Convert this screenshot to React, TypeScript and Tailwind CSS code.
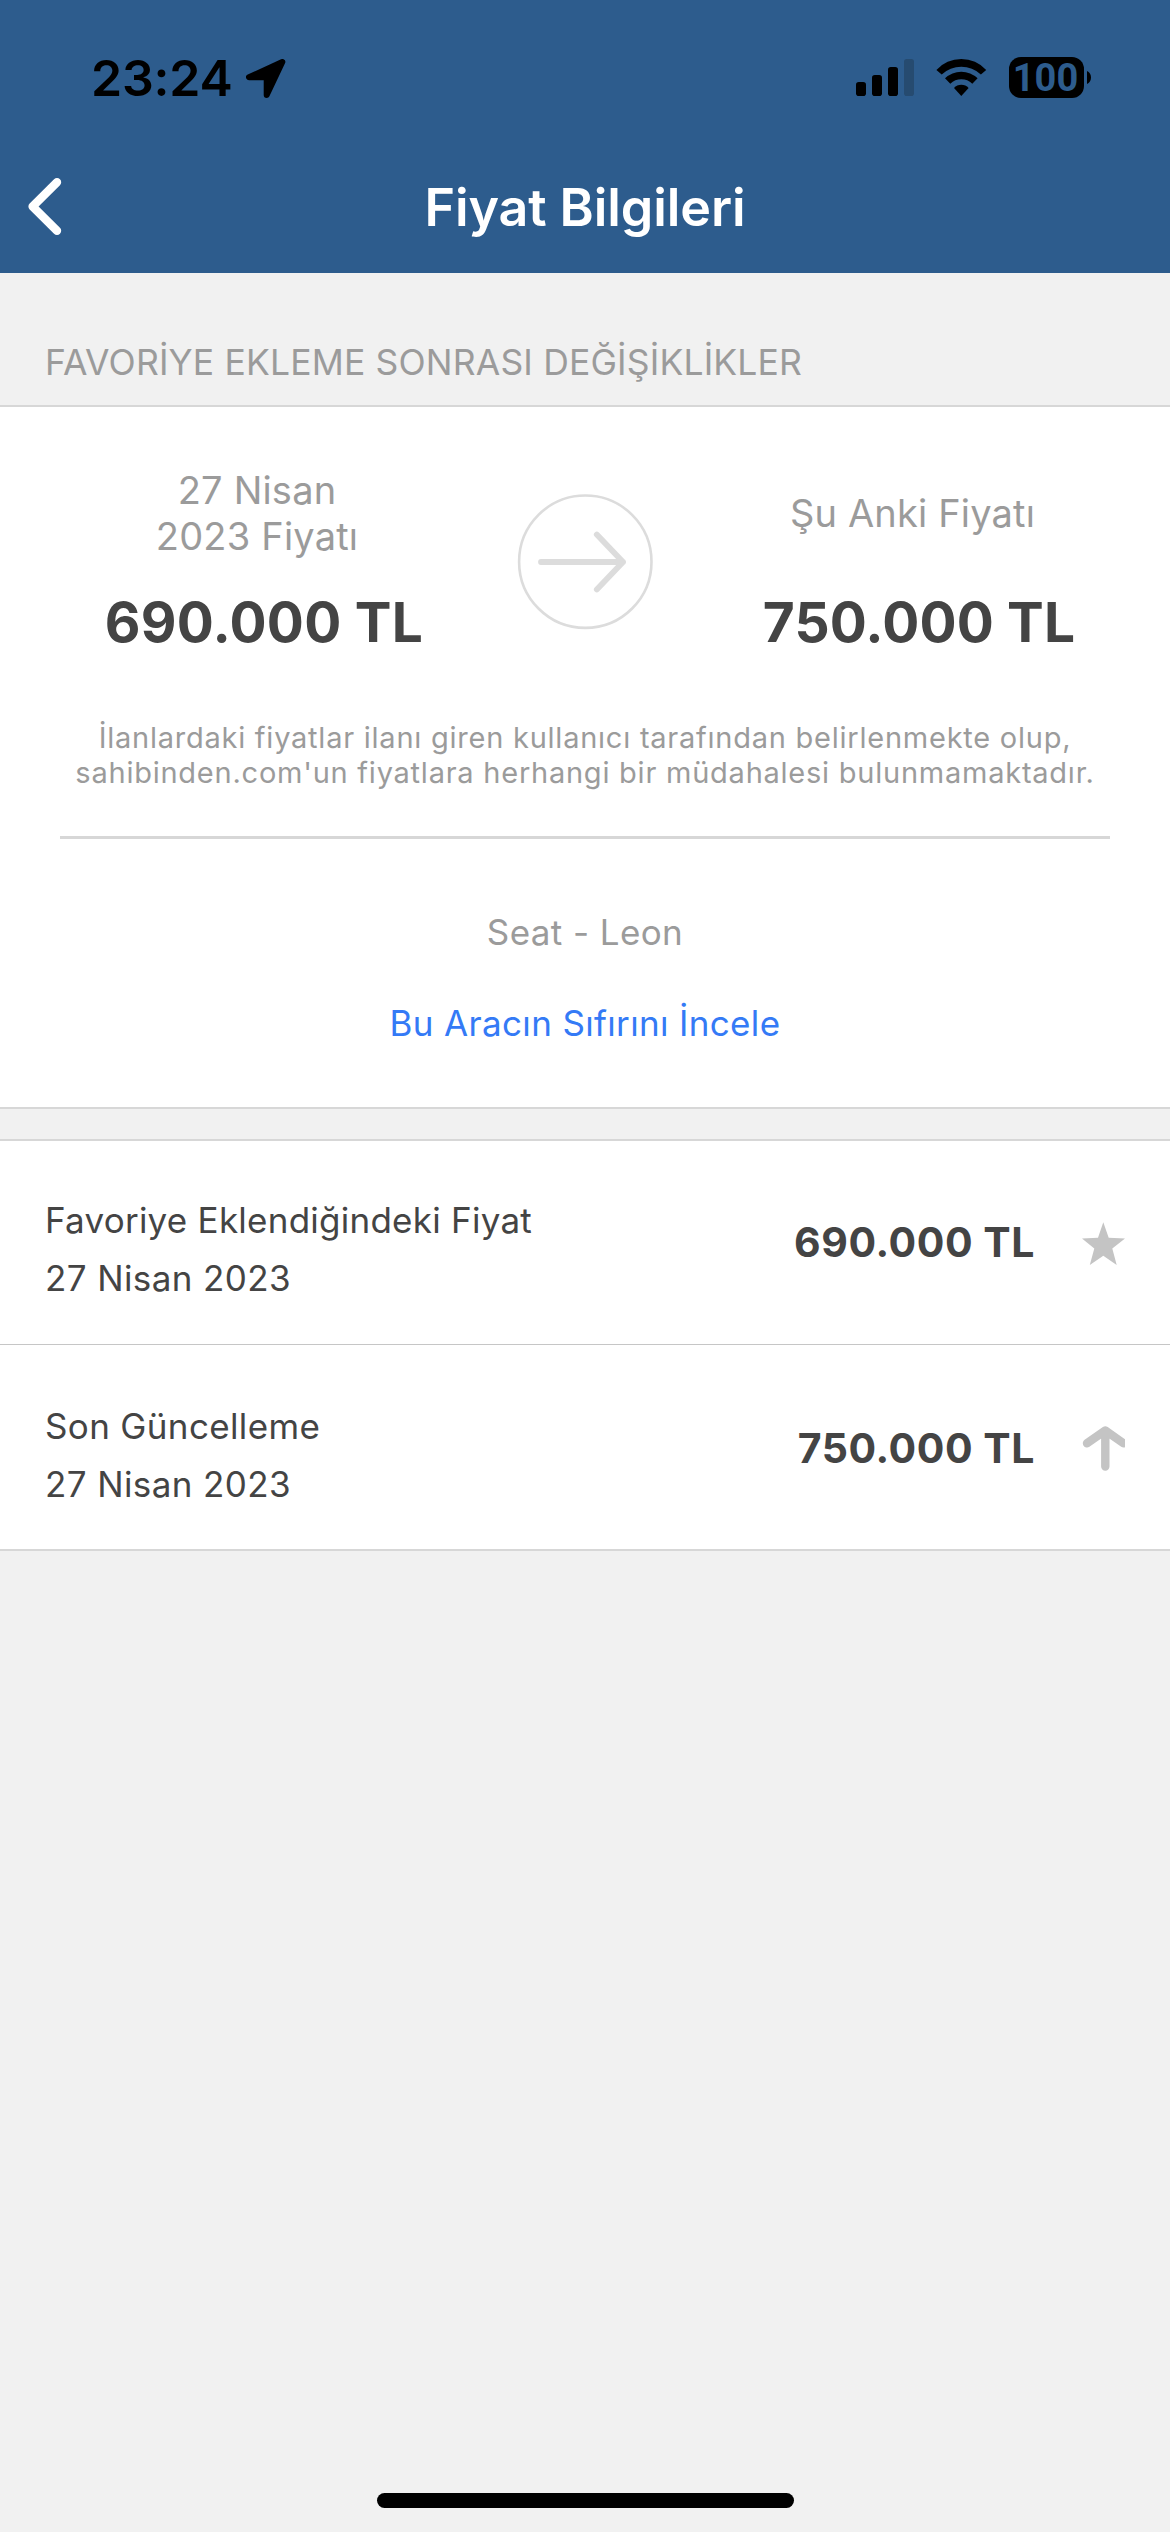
const SignalIcon = () => (
  <svg width="58" height="37" viewBox="0 0 58 37" fill="#000000">
    <rect x="0" y="23" width="10" height="14" rx="2.8" />
    <rect x="16" y="16" width="10" height="21" rx="2.8" />
    <rect x="32" y="8" width="10" height="29" rx="2.8" />
    <rect x="48" y="0" width="10" height="37" rx="2.8" fill="#264b70" />
  </svg>
);

const WifiIcon = () => (
  <svg width="51" height="38" viewBox="0 0 51 38" fill="#000000">
    <path d="M0.4 12A33.5 33.5 0 0 1 50.2 12L44.9 16.4A28.8 28.8 0 0 0 5.7 16.4Z" />
    <path d="M9 20.3A23.5 23.5 0 0 1 41.6 20.3L36.3 25.7A16 16 0 0 0 14.3 25.7Z" />
    <path d="M18 30A9.7 9.7 0 0 1 32.6 30L25.3 38Z" />
  </svg>
);

const StatusBar = () => {
  return (
    <div className="flex h-[142px] items-start justify-between pl-[91px] pr-[79px]">
      <div className="flex items-start pt-12">
        <span className="w-[155px] text-[50px] leading-[60px] font-semibold tracking-[-0.2px] text-black">
          23:24
        </span>
        <svg width="40" height="40" viewBox="0 0 40 40" className="mt-[11px]">
          <path
            d="M36.3 3L3 18.3H20.7V36Z"
            fill="#000000"
            stroke="#000000"
            strokeWidth="6"
            strokeLinejoin="round"
          />
        </svg>
      </div>
      <div className="flex items-start pt-[57px]">
        <div className="mt-[2px] mr-[22px]">
          <SignalIcon />
        </div>
        <div className="mt-px mr-[22px]">
          <WifiIcon />
        </div>
        <div className="flex h-[41px] w-[75px] items-center justify-center rounded-[12px] bg-black pr-[2px]">
          <span className="font-['Roboto',sans-serif] text-[38px] leading-[44px] font-bold text-[#2d5c8d]">
            100
          </span>
        </div>
        <svg width="4" height="13" viewBox="0 0 4 13" className="mt-[14px] ml-[3px]">
          <path d="M0 0C2.4 1 4 3.4 4 6.5S2.4 12 0 13Z" fill="#000000" />
        </svg>
      </div>
    </div>
  );
};

const Header = () => {
  return (
    <header className="h-[273px] bg-[#2d5c8d]">
      <StatusBar />
      <div className="grid h-[131px] grid-cols-[120px_1fr_120px] items-center">
        <svg width="61" height="61" viewBox="0 0 61 61" className="ml-[10px]">
          <path
            d="M47 5.2L22.6 29.5L47 53.8"
            fill="none"
            stroke="#ffffff"
            strokeWidth="8.4"
            strokeLinecap="round"
            strokeLinejoin="round"
          />
        </svg>
        <h1 className="text-center text-[52px] leading-[63px] font-semibold tracking-[-0.1px] text-white">
          Fiyat Bilgileri
        </h1>
      </div>
    </header>
  );
};

const PriceSummary = () => {
  return (
    <section className="h-[704px] border-y-2 border-[#d7d7d7] bg-white pt-[60px] text-center text-[#9b9b9b]">
      <div className="grid grid-cols-[517px_136px_517px]">
        <div>
          <p className="h-[92px] pr-[3px] text-[38px] leading-[46px] tracking-[0.2px]">
            27 Nisan
            <br />
            2023 Fiyatı
          </p>
          <p className="mt-[30px] pl-[11px] text-[55px] leading-[66px] font-bold tracking-[0.25px] text-[#444444]">
            690.000 TL
          </p>
        </div>
        <svg
          width="136"
          height="138"
          viewBox="0 0 136 138"
          fill="none"
          stroke="#dcdcdc"
          className="self-center"
        >
          <circle cx="68.3" cy="69.7" r="66.2" strokeWidth="2.6" />
          <path
            d="M24 70H106M79.8 42.6L106 70L79.8 97.4"
            strokeWidth="5.8"
            strokeLinecap="round"
            strokeLinejoin="round"
          />
        </svg>
        <div>
          <p className="flex h-[92px] items-center justify-center pl-[2px] text-[38px] leading-[46px] tracking-[0.17px]">
            Şu Anki Fiyatı
          </p>
          <p className="mt-[30px] pl-[15px] text-[55px] leading-[66px] font-bold tracking-[0.15px] text-[#444444]">
            750.000 TL
          </p>
        </div>
      </div>
      <p className="mt-[65px] text-[29px] leading-[35px] tracking-[0.76px]">
        İlanlardaki fiyatlar ilanı giren kullanıcı tarafından belirlenmekte olup,
        <br />
        sahibinden.com'un fiyatlara herhangi bir müdahalesi bulunmamaktadır.
      </p>
      <div className="mx-[60px] mt-[46px] h-[3px] bg-[#d7d7d7]"></div>
      <p className="mt-[72px] text-[35px] leading-[42px] tracking-[0.4px]">
        Seat - Leon
      </p>
      <a className="mt-[49px] block text-[35px] leading-[42px] tracking-[0.34px] text-[#347af6]">
        Bu Aracın Sıfırını İncele
      </a>
    </section>
  );
};

const StarIcon = () => (
  <svg width="43" height="50" viewBox="0 0 43 50" fill="#c4c4c4">
    <path d="M21.3 2.3L26.7 17.7L43 18.6L30.3 28.6L34.7 45L21.3 35.8L7.8 45L12.3 28.6L0 18.6L16 17.7Z" />
  </svg>
);

// the right arm runs off the edge of its box
const UpIcon = () => (
  <svg
    width="43"
    height="50"
    viewBox="0 0 43 50"
    fill="none"
    stroke="#c4c4c4"
    strokeWidth="8.4"
    strokeLinecap="round"
    strokeLinejoin="round"
  >
    <path d="M23.3 40.5V5M5 17.3L23.3 4.5L41.6 17.3" />
  </svg>
);

const App = () => {
  return (
    <div className="flex h-[2532px] w-[1170px] flex-col bg-[#f1f1f1] font-['Inter',sans-serif]">
      <Header />
      <h2 className="h-[132px] pt-[68px] pl-[45px] text-[35.5px] leading-[43px] tracking-[0.16px] text-[#9b9b9b]">
        FAVORİYE EKLEME SONRASI DEĞİŞİKLİKLER
      </h2>
      <PriceSummary />

      <section className="mt-[30px] border-y-2 border-[#d7d7d7] bg-white text-[#444444]">
        <div className="flex h-[204px] items-start border-b border-[#c6c6c6] px-[45px] pt-[58px]">
          <div className="flex flex-1 flex-col gap-4 text-[35px] leading-[42px]">
            <p className="tracking-[0.25px]">Favoriye Eklendiğindeki Fiyat</p>
            <p className="tracking-[0.4px]">27 Nisan 2023</p>
          </div>
          <p className="mt-[18px] mr-[47px] text-[41px] leading-[50px] font-bold tracking-[0.55px]">
            690.000 TL
          </p>
          <div className="mt-[21px]">
            <StarIcon />
          </div>
        </div>
        <div className="flex h-[204px] items-start px-[45px] pt-[60px]">
          <div className="flex flex-1 flex-col gap-4 text-[35px] leading-[42px]">
            <p className="tracking-[0.35px]">Son Güncelleme</p>
            <p className="tracking-[0.4px]">27 Nisan 2023</p>
          </div>
          <p className="mt-[18px] mr-[47px] text-[41px] leading-[50px] font-bold tracking-[0.55px]">
            750.000 TL
          </p>
          <div className="mt-[21px]">
            <UpIcon />
          </div>
        </div>
      </section>

      <div className="mx-auto mt-auto mb-[24px] h-[15px] w-[417px] rounded-full bg-black"></div>
    </div>
  );
};

export default App;
